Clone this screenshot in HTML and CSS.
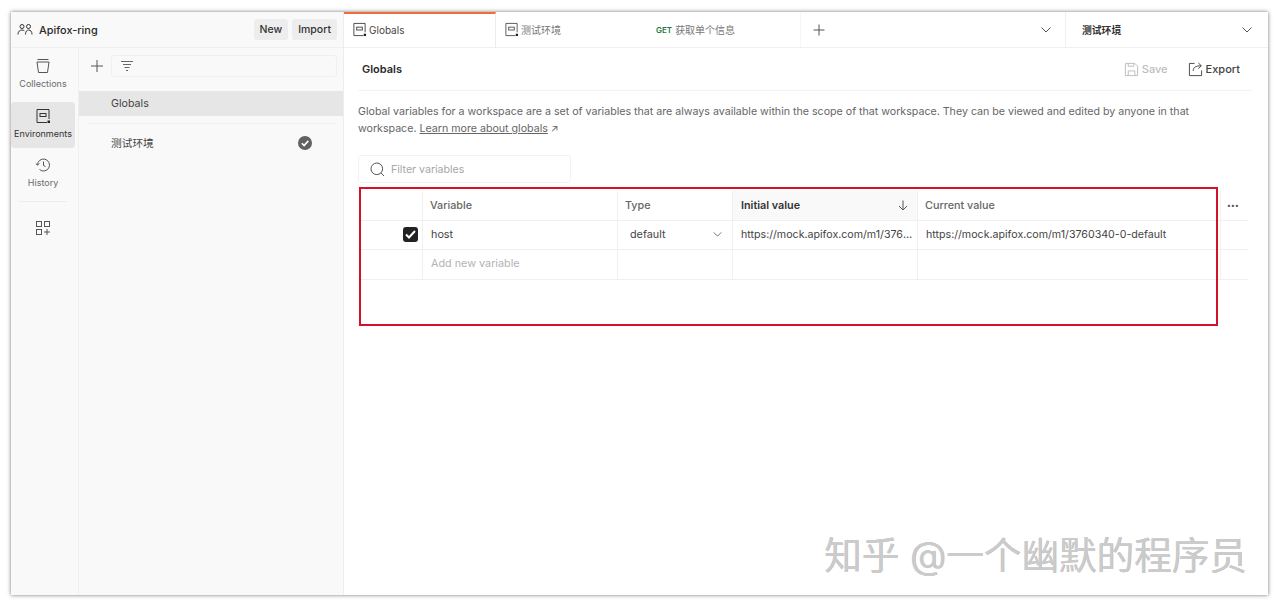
FILE: index.html
```html
<!DOCTYPE html>
<html lang="en">
<head>
  <meta charset="UTF-8">
  <meta name="viewport" content="width=device-width, initial-scale=1.0">
  <title>Globals</title>
  <link rel="stylesheet" href="styles.css">
</head>
<body>

<div class="window">
  <aside class="sidebar">
    <div class="workspace">
      <svg class="workspace-icon" width="16" height="16" viewBox="0 0 16 16" fill="none" stroke="#333" stroke-width="1"><circle cx="5" cy="4.500" r="2"/><circle cx="11.500" cy="4.500" r="2"/><path d="M1 12.500c0-3 1.800-4.500 4-4.500 1 0 1.700.3 2.300.8M8.500 12.500c0-3 1.300-4.500 3.200-4.500s3.300 1.500 3.300 4.500"/></svg>
      <span class="workspace-name">Apifox-ring</span>
      <button class="head-btn">New</button>
      <button class="head-btn">Import</button>
    </div>
    <div class="sidebar-body">
      <nav class="rail">
        <div class="rail-item">
          <svg width="16" height="16" viewBox="0 0 16 16" fill="none" stroke="#555" stroke-width="1"><path d="M2.500 1.500h11M2 4h12l-1.500 10.500h-9z"/></svg>
          <span>Collections</span>
        </div>
        <div class="rail-item rail-active">
          <svg width="16" height="16" viewBox="0 0 16 16" fill="none" stroke="#333" stroke-width="1"><path d="M12 14.500H2V1.500h12v9.500"/><rect x="5" y="5.500" width="6" height="3"/><rect x="12.500" y="12.500" width="2.500" height="2.500" fill="#222" stroke="none"/></svg>
          <span>Environments</span>
        </div>
        <div class="rail-item">
          <svg width="16" height="16" viewBox="0 0 16 16" fill="none" stroke="#555" stroke-width="1"><path d="M2.500 8a6 6 0 1 1 2 4.500M.8 6.500l1.700 1.700 1.700-1.700M8.500 4.500v4l2 1"/></svg>
          <span>History</span>
        </div>
        <div class="rail-line"></div>
        <div class="rail-item rail-icon">
          <svg width="16" height="16" viewBox="0 0 16 16" fill="none" stroke="#555" stroke-width="1"><rect x="1.500" y="1.500" width="5" height="5"/><rect x="9.500" y="1.500" width="5" height="5"/><rect x="1.500" y="9.500" width="5" height="5"/><path d="M12 9v6M9 12h6"/></svg>
        </div>
      </nav>
      <div class="env-panel">
        <div class="env-tools">
          <svg class="env-plus" width="16" height="16" viewBox="0 0 16 16" fill="none" stroke="#555" stroke-width="1"><path d="M8 2v12M2 8h12"/></svg>
          <div class="env-search">
            <svg width="14" height="14" viewBox="0 0 14 14" fill="none" stroke="#666" stroke-width="1"><path d="M1 2.500h12M3 5.500h8M4.500 8.500h5M6 11.500h2"/></svg>
          </div>
        </div>
        <div class="env-row env-selected">Globals</div>
        <div class="env-sep"></div>
        <div class="env-row">
          <span>测试环境</span>
          <svg class="env-check" width="14" height="14" viewBox="0 0 14 14"><circle cx="7" cy="7" r="7" fill="#616161"/><path d="M3.800 7.200l2.300 2.300 4.200-4.600" fill="none" stroke="#fff" stroke-width="1.600"/></svg>
        </div>
      </div>
    </div>
  </aside>

  <main class="main">
    <div class="tabbar">
      <div class="tab tab-active">
        <svg width="15" height="15" viewBox="0 0 16 16" fill="none" stroke="#444" stroke-width="1"><path d="M12 14.500H2V1.500h12v9.500"/><rect x="5" y="5.500" width="6" height="3"/><rect x="12.500" y="12.500" width="2.500" height="2.500" fill="#222" stroke="none"/></svg>
        <span>Globals</span>
      </div>
      <div class="tab">
        <svg width="15" height="15" viewBox="0 0 16 16" fill="none" stroke="#555" stroke-width="1"><path d="M12 14.500H2V1.500h12v9.500"/><rect x="5" y="5.500" width="6" height="3"/><rect x="12.500" y="12.500" width="2.500" height="2.500" fill="#222" stroke="none"/></svg>
        <span>测试环境</span>
      </div>
      <div class="tab tab-line">
        <span class="method">GET</span>
        <span>获取单个信息</span>
      </div>
      <div class="tab-add">
        <svg width="14" height="14" viewBox="0 0 14 14" fill="none" stroke="#555" stroke-width="1"><path d="M7 1.500v11M1.500 7h11"/></svg>
      </div>
      <div class="tab-more">
        <svg width="10" height="6" viewBox="0 0 10 6" fill="none" stroke="#555" stroke-width="1"><path d="M.5.500L5 5 9.500.500"/></svg>
      </div>
      <div class="env-picker">
        <span>测试环境</span>
        <svg width="10" height="6" viewBox="0 0 10 6" fill="none" stroke="#555" stroke-width="1"><path d="M.5.500L5 5 9.500.500"/></svg>
      </div>
    </div>

    <div class="page">
      <div class="page-head">
        <h1>Globals</h1>
        <div class="page-actions">
          <span class="action action-off">
            <svg width="15" height="15" viewBox="0 0 16 16" fill="none" stroke="#bbb" stroke-width="1"><path d="M1.500 1.500h10l3 3v10h-13zM4.500 1.500v3h6v-3M4.500 14.500v-5h7v5"/></svg>
            Save
          </span>
          <span class="action">
            <svg width="15" height="15" viewBox="0 0 16 16" fill="none" stroke="#444" stroke-width="1"><path d="M7 1.500H1.500v13h13V9M5.500 9.500c0-3.500 2.500-5.500 8.500-5.500M11 1l3.200 3L11 7"/></svg>
            Export
          </span>
        </div>
      </div>

      <p class="intro">Global variables for a workspace are a set of variables that are always available within the scope of that workspace. They can be viewed and edited by anyone in that workspace. <a href="#">Learn more about globals</a> <span class="arrow">↗</span></p>

      <div class="filter">
        <svg width="15" height="15" viewBox="0 0 15 15" fill="none" stroke="#555" stroke-width="1"><circle cx="6.800" cy="6.800" r="5.800"/><path d="M11 11l3 3"/></svg>
        <span>Filter variables</span>
      </div>

      <div class="table">
        <div class="t-row t-head">
          <div class="cell cell-check"></div>
          <div class="cell cell-var">Variable</div>
          <div class="cell cell-type">Type</div>
          <div class="cell cell-init cell-sorted">
            <span>Initial value</span>
            <svg width="10" height="11" viewBox="0 0 10 11" fill="none" stroke="#555" stroke-width="1"><path d="M5 .500v9.500M1 6l4 4 4-4"/></svg>
          </div>
          <div class="cell cell-cur">Current value</div>
          <div class="cell cell-opts">•••</div>
        </div>
        <div class="t-row">
          <div class="cell cell-check">
            <span class="checkbox">
              <svg width="11" height="9" viewBox="0 0 11 9" fill="none" stroke="#fff" stroke-width="2"><path d="M1 4.500l3 3 6-6.500"/></svg>
            </span>
          </div>
          <div class="cell cell-var">host</div>
          <div class="cell cell-type cell-select">
            <span>default</span>
            <svg width="9" height="5" viewBox="0 0 10 6" fill="none" stroke="#555" stroke-width="1"><path d="M.5.500L5 5 9.500.500"/></svg>
          </div>
          <div class="cell cell-init cell-url"><span class="clip">https://mock.apifox.com/m1/3760340-0-default</span></div>
          <div class="cell cell-cur cell-url">https://mock.apifox.com/m1/3760340-0-default</div>
          <div class="cell cell-opts"></div>
        </div>
        <div class="t-row">
          <div class="cell cell-check"></div>
          <div class="cell cell-var cell-hint">Add new variable</div>
          <div class="cell cell-type"></div>
          <div class="cell cell-init"></div>
          <div class="cell cell-cur"></div>
          <div class="cell cell-opts"></div>
        </div>
      </div>
    </div>
  </main>
</div>

<div class="red-box"></div>
<div class="watermark">知乎 @一个幽默的程序员</div>

</body>
</html>
```

FILE: styles.css
```css
* {
  box-sizing: border-box;
}

html, body {
  height: 100%;
}

body {
  margin: 0;
  padding: 12px 12px 11px 11px;
  background-color: #fff;
  font-family: Inter, "Noto Sans CJK SC", sans-serif;
  font-size: 11px;
  color: #333;
  overflow: hidden;
}

.window {
  display: flex;
  height: 100%;
  background-color: #fff;
  box-shadow: 0 0 4px rgba(0, 0, 0, 0.55);
}

/* sidebar */
.sidebar {
  width: 333px;
  flex-shrink: 0;
  display: flex;
  flex-direction: column;
  background-color: #f9f9f9;
  border-right: 1px solid #ededed;
}

.workspace {
  height: 36px;
  display: flex;
  align-items: center;
  gap: 4px;
  padding: 0 6px 0 6px;
  border-bottom: 1px solid #f0f0f0;
}

.workspace-icon {
  margin-right: 2px;
}

.workspace-name {
  flex: 1;
  font-size: 10.9px;
  font-weight: 500;
  color: #2b2b2b;
}

.head-btn {
  height: 21px;
  padding: 0 6px;
  border: none;
  border-radius: 3px;
  background-color: #ededed;
  font-family: inherit;
  font-size: 10.5px;
  font-weight: 500;
  color: #333;
}

.sidebar-body {
  flex: 1;
  display: flex;
}

.rail {
  width: 68px;
  flex-shrink: 0;
  display: flex;
  flex-direction: column;
  align-items: flex-start;
  padding-top: 4px;
  border-right: 1px solid #f0f0f0;
}

.rail-item {
  width: 64px;
  height: 46px;
  margin-bottom: 3.5px;
  padding-bottom: 3px;
  display: flex;
  flex-direction: column;
  align-items: center;
  justify-content: center;
  gap: 4px;
  border-radius: 4px;
  font-size: 9px;
  color: #6b6b6b;
}

.rail-active {
  background-color: #e6e6e6;
  color: #333;
}

.rail-line {
  width: 48px;
  height: 1px;
  margin: 0 0 0 8px;
  background-color: #ededed;
}

.rail-icon {
  height: 55px;
}

.env-panel {
  flex: 1;
}

.env-tools {
  height: 43px;
  display: flex;
  align-items: flex-start;
  gap: 6px;
  padding: 7px 6px 0 10px;
}

.env-plus {
  margin-top: 3px;
}

.env-search {
  flex: 1;
  height: 22px;
  display: flex;
  align-items: center;
  padding-left: 8px;
  border: 1px solid #f0f0f0;
  border-radius: 3px;
}

.env-row {
  height: 37px;
  display: flex;
  align-items: center;
  justify-content: space-between;
  padding: 0 31px 0 32px;
  font-size: 10.7px;
  color: #444;
}

.env-selected {
  height: 25px;
  background-color: #e6e6e6;
}

.env-sep {
  height: 1px;
  margin: 7px 8px 0;
  background-color: #eeeeee;
}

/* tabs */
.main {
  flex: 1;
  min-width: 0;
  display: flex;
  flex-direction: column;
}

.tabbar {
  height: 36px;
  flex-shrink: 0;
  display: flex;
  align-items: center;
  border-bottom: 1px solid #f0f0f0;
  font-size: 10px;
  color: #777;
}

.tab {
  width: 152px;
  height: 100%;
  display: flex;
  align-items: center;
  gap: 2px;
  padding: 0 8px;
}

.tab-active {
  height: 36px;
  padding-bottom: 2px;
  border-top: 2px solid #f26b3a;
  border-right: 1px solid #ececec;
  color: #444;
}

.tab-line {
  width: 153px;
  border-right: 1px solid #f6f6f6;
  gap: 3px;
}

.method {
  font-size: 8px;
  font-weight: 600;
  color: #1f7a3d;
}

.tab-add {
  width: 36px;
  display: flex;
  justify-content: center;
}

.tab-more {
  flex: 1;
  display: flex;
  justify-content: flex-end;
  padding-right: 14px;
}

.env-picker {
  width: 203px;
  height: 100%;
  display: flex;
  align-items: center;
  justify-content: space-between;
  padding: 0 16px;
  border-left: 1px solid #f0f0f0;
  font-size: 9.8px;
  font-weight: 600;
  color: #333;
}

/* page */
.page {
  flex: 1;
  padding: 0 20px 0 14px;
}

.page-head {
  height: 43px;
  margin-right: -4px;
  display: flex;
  align-items: center;
  justify-content: space-between;
  padding: 0 12px 0 4px;
  border-bottom: 1px solid #f3f3f3;
}

.page-head h1 {
  margin: 0;
  font-size: 11px;
  font-weight: 600;
  color: #2b2b2b;
}

.page-actions {
  display: flex;
  gap: 20px;
}

.action {
  display: flex;
  align-items: center;
  gap: 3px;
  font-size: 11px;
  font-weight: 500;
  color: #444;
}

.action-off {
  color: #bdbdbd;
}

.intro {
  width: 850px;
  margin: 12px 0 0;
  font-size: 10.65px;
  line-height: 17px;
  color: #666;
}

.intro a {
  color: #666;
  text-decoration: underline;
}

.arrow {
  font-size: 10px;
  line-height: 1;
}

.filter {
  width: 213px;
  height: 28px;
  margin-top: 18px;
  display: flex;
  align-items: center;
  gap: 6px;
  padding-left: 11px;
  border: 1px solid #f3f3f3;
  border-radius: 3px;
  font-size: 10.6px;
  color: #a6a6a6;
}

/* table */
.table {
  margin-top: 8px;
  width: 890px;
}

.t-row {
  height: 29.5px;
  display: flex;
  border-bottom: 1px solid #f0f0f0;
  color: #444;
}

.t-head {
  font-weight: 500;
  color: #666;
}

.cell {
  display: flex;
  align-items: center;
  padding: 0 7px;
  border-right: 1px solid #f0f0f0;
  font-size: 10.8px;
}

.cell-check {
  width: 65px;
  justify-content: flex-end;
  padding: 0 4px 0 0;
}

.cell-var {
  width: 195px;
  padding-left: 8px;
}

.t-head .cell-var {
  padding-left: 7px;
}

.cell-type {
  width: 115px;
}

.cell-select {
  justify-content: space-between;
  padding: 0 10px 0 12px;
}

.cell-init {
  width: 185px;
  padding-left: 8px;
}

.cell-sorted {
  justify-content: space-between;
  padding-right: 9px;
  background-color: #f9f9f9;
  font-weight: 600;
  color: #333;
}

.cell-cur {
  width: 303px;
}

.cell-url {
  padding-right: 4px;
  font-size: 10.65px;
}

.cell-cur.cell-url {
  padding-left: 8px;
}

.cell-opts {
  flex: 1;
  justify-content: flex-start;
  padding: 0 0 0 6px;
  border-right: none;
  font-size: 7px;
  letter-spacing: 0.3px;
  color: #555;
}

.cell-hint {
  padding-bottom: 2px;
  color: #b3b3b3;
}

.clip {
  overflow: hidden;
  white-space: nowrap;
  text-overflow: ellipsis;
}

.checkbox {
  width: 15px;
  height: 15px;
  display: flex;
  align-items: center;
  justify-content: center;
  border-radius: 3px;
  background-color: #222;
}

/* annotation and watermark over the screenshot */
.red-box {
  position: absolute;
  left: 359px;
  top: 187px;
  width: 859px;
  height: 139px;
  border: 2px solid #d3122a;
}

.watermark {
  position: absolute;
  left: 824px;
  top: 534px;
  font-size: 37.6px;
  line-height: 44px;
  white-space: nowrap;
  color: #cbcbcb;
  text-shadow: 0.5px 0 0 #b8b8b8;
}
```
